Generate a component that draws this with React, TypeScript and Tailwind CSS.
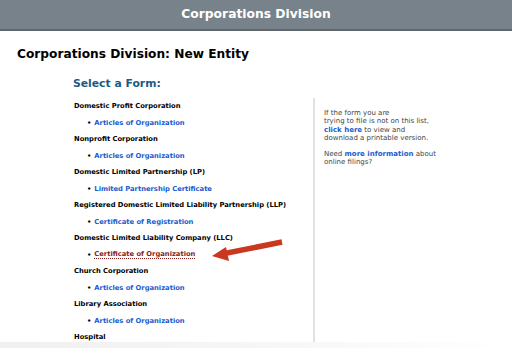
import React from "react";

const items: { heading: string; link?: string; active?: boolean }[] = [
  { heading: "Domestic Profit Corporation", link: "Articles of Organization" },
  { heading: "Nonprofit Corporation", link: "Articles of Organization" },
  { heading: "Domestic Limited Partnership (LP)", link: "Limited Partnership Certificate" },
  { heading: "Registered Domestic Limited Liability Partnership (LLP)", link: "Certificate of Registration" },
  { heading: "Domestic Limited Liability Company (LLC)", link: "Certificate of Organization", active: true },
  { heading: "Church Corporation", link: "Articles of Organization" },
  { heading: "Library Association", link: "Articles of Organization" },
  { heading: "Hospital" },
];

export default function App() {
  return (
    <div
      className="relative w-[512px] h-[354px] overflow-hidden bg-white"
      style={{ fontFamily: '"DejaVu Sans", Verdana, sans-serif' }}
    >
      <div className="h-[31px] bg-[#78828a] border-b-2 border-[#5f676d] flex items-center justify-center">
        <span className="text-white font-bold text-[12.3px]">Corporations Division</span>
      </div>
      <h1 className="pl-[17px] pt-[14px] text-[12.2px] leading-[18px] font-bold text-black">
        Corporations Division: New Entity
      </h1>
      <h2 className="pl-[73px] mt-[12px] text-[10.8px] leading-[18px] font-bold text-[#1d5a86]">Select a Form:</h2>
      <div className="flex mt-[5px]">
        <div className="w-[313px] pl-[74px]">
          {items.map((it, i) => (
            <div key={i}>
              <div className="h-[16.5px] flex items-center text-[6.75px] font-bold text-black">{it.heading}</div>
              {it.link && (
                <div className="h-[16.5px] flex items-center pl-[13px] text-[6.75px] font-bold">
                  <span className="text-black mr-[3px]">•</span>
                  <span
                    className={
                      it.active
                        ? "text-[#8b1c1c] border-b border-dotted border-[#8b1c1c] leading-[8px]"
                        : "text-[#1a5bd0]"
                    }
                  >
                    {it.link}
                  </span>
                </div>
              )}
            </div>
          ))}
        </div>
        <div className="flex-1 border-l-2 border-[#e2e2e2] pl-[9px] pt-[11px] h-[250px] text-[7px] leading-[8.3px] text-[#444]">
          <p>
            If the form you are
            <br />
            trying to file is not on this list,
            <br />
            <span className="font-bold text-[#1a5bd0]">click here</span> to view and
            <br />
            download a printable version.
          </p>
          <p className="mt-[8px]">
            Need <span className="font-bold text-[#1a5bd0]">more information</span> about
            <br />
            online filings?
          </p>
        </div>
      </div>
      <div className="absolute left-0 top-[342px] w-full h-[6px] bg-gradient-to-r from-[#f0f0f0] via-[#f6f6f6] to-white" />
      <svg className="absolute left-0 top-0" width="512" height="354" viewBox="0 0 512 354">
        <line x1="282" y1="242" x2="222" y2="254" stroke="#c9381f" strokeWidth="5.5" strokeLinecap="butt" />
        <polygon points="212,256 226,247 229,261" fill="#c9381f" />
      </svg>
    </div>
  );
}
